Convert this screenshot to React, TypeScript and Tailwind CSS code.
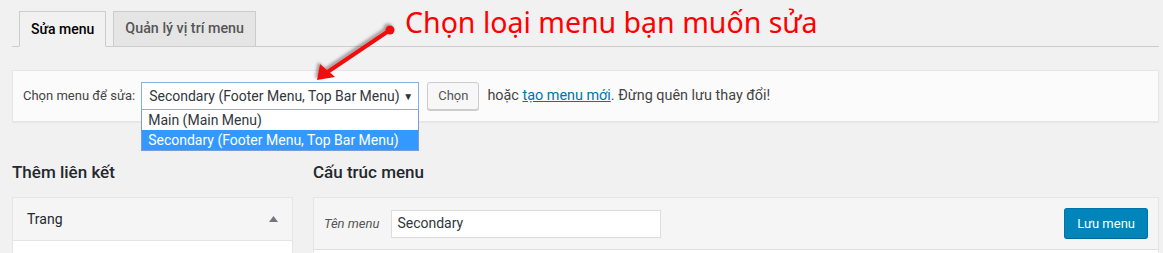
import React from "react";

function RedArrow() {
  return (
    <svg
      className="absolute left-[300px] top-[18px]"
      width="100"
      height="70"
      viewBox="300 18 100 70"
    >
      <defs>
        <filter id="sh" x="-30%" y="-30%" width="160%" height="160%">
          <feDropShadow dx="-2" dy="-2" stdDeviation="1.6" floodColor="#000" floodOpacity="0.35" />
        </filter>
      </defs>
      <g filter="url(#sh)">
        <line x1="390" y1="30" x2="326" y2="73" stroke="#f01010" strokeWidth="4" strokeLinecap="round" />
        <circle cx="390" cy="30" r="4.5" fill="#f01010" />
        <polygon points="317,80 320,64 335,77" fill="#f01010" />
      </g>
    </svg>
  );
}

export default function App() {
  return (
    <div className="relative w-[1163px] h-[253px] overflow-hidden bg-[#f1f1f1] pl-3 pr-[4px] text-[#23282d] font-['Roboto',sans-serif]">
      {/* tabs */}
      <div className="flex items-end gap-[7px] h-[47px] pt-[11px] pl-[7px] border-b border-[#ccc]">
        <div className="h-[36px] -mb-px flex items-center px-[11px] border border-[#ccc] border-b-[#f1f1f1] bg-[#f1f1f1] text-[14px] font-medium text-[#000]">
          Sửa menu
        </div>
        <div className="h-[35px] flex items-center px-[11px] border border-[#ccc] border-b-0 bg-[#e5e5e5] text-[14.3px] font-medium text-[#555]">
          Quản lý vị trí menu
        </div>
      </div>

      {/* manage menus */}
      <div className="mt-[23px] h-[52px] flex items-center px-[10px] bg-[#fbfbfb] border border-[#e5e5e5] shadow-[0_1px_1px_rgba(0,0,0,0.04)] text-[13px] text-[#444]">
        <span className="mr-[6px] whitespace-nowrap">Chọn menu để sửa:</span>
        <div className="relative">
          <div className="w-[278px] h-[28px] flex items-center justify-between pl-[7px] pr-[5px] bg-white border border-[#7eb4ea] text-[14px] text-[#32373c] whitespace-nowrap">
            <span>Secondary (Footer Menu, Top Bar Menu)</span>
            <span className="text-[10px] text-[#333]">▼</span>
          </div>
          <div className="absolute left-0 top-full z-10 w-[278px] bg-white border border-[#7a9cd3] border-t-0 text-[14px] text-[#32373c] whitespace-nowrap">
            <div className="h-[20px] flex items-center pl-[6px]">Main (Main Menu)</div>
            <div className="h-[20px] flex items-center pl-[6px] bg-[#3399ff] text-white">Secondary (Footer Menu, Top Bar Menu)</div>
          </div>
        </div>
        <button className="ml-[8px] h-[28px] px-[10px] bg-[#f7f7f7] border border-[#ccc] rounded-[3px] shadow-[0_1px_0_#ccc] text-[13px] text-[#555]">
          Chọn
        </button>
        <span className="ml-[8px] whitespace-nowrap text-[14.4px]">
          hoặc <span className="text-[#0073aa] underline">tạo menu mới</span>. Đừng quên lưu thay đổi!
        </span>
      </div>

      {/* columns */}
      <div className="mt-[40px] flex gap-[20px]">
        <div className="w-[281px] shrink-0">
          <h3 className="h-[35px] text-[17px] font-medium leading-[20px]">Thêm liên kết</h3>
          <div className="border border-[#e5e5e5] bg-white">
            <div className="h-[43px] flex items-center justify-between pl-[14px] pr-[14px] bg-[#f5f5f5] border-b border-[#e5e5e5] text-[14px]">
              <span>Trang</span>
              <svg width="9" height="6" viewBox="0 0 9 6">
                <polygon points="4.5,0 9,6 0,6" fill="#72777c" />
              </svg>
            </div>
            <div className="h-[20px]" />
          </div>
        </div>
        <div className="flex-1">
          <h3 className="h-[35px] text-[17px] font-medium leading-[20px]">Cấu trúc menu</h3>
          <div className="border border-[#e5e5e5] bg-white">
            <div className="h-[52px] flex items-center pl-[10px] pr-[10px] bg-[#f5f5f5] border-b border-[#dfdfdf]">
              <span className="italic text-[13px] text-[#555] mr-[12px]">Tên menu</span>
              <div className="w-[270px] h-[28px] flex items-center px-[5px] bg-white border border-[#ddd] text-[14px] text-[#32373c]">
                Secondary
              </div>
              <button className="ml-auto h-[31px] px-[12px] bg-[#0085ba] border border-[#0073aa] border-b-[#006799] rounded-[3px] text-[13px] text-white">
                Lưu menu
              </button>
            </div>
            <div className="h-[20px]" />
          </div>
        </div>
      </div>

      {/* annotation */}
      <div className="absolute left-[405px] top-[2px] text-[28.5px] text-[#ff0000] leading-[40px] whitespace-nowrap font-['Noto_Sans',sans-serif]">
        Chọn loại menu bạn muốn sửa
      </div>
      <RedArrow />
    </div>
  );
}
